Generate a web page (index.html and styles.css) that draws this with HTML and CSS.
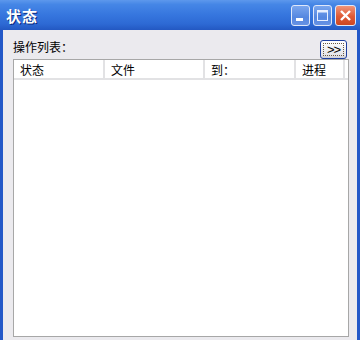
FILE: index.html
```html
<!DOCTYPE html>
<html>
<head>
    <meta charset="utf-8">
    <link rel="stylesheet" href="styles.css">
    <title>状态</title>
</head>
<body>
<div class="window">
    <div class="titlebar">
        <span class="title">状态</span>
        <div class="tb-buttons">
            <div class="tb-btn">
                <svg width="19" height="21" viewBox="0 0 19 21"><rect x="5" y="13" width="7" height="3" fill="#fff"/></svg>
            </div>
            <div class="tb-btn">
                <svg width="19" height="21" viewBox="0 0 19 21"><rect x="4.5" y="5.5" width="10" height="10" fill="none" stroke="#e8f0ff" stroke-width="1"/><rect x="4.5" y="5.5" width="10" height="2" fill="#e8f0ff"/></svg>
            </div>
            <div class="tb-btn close">
                <svg width="21" height="21" viewBox="0 0 21 21"><path d="M6 6 L15 15 M15 6 L6 15" stroke="#fff" stroke-width="2.4"/></svg>
            </div>
        </div>
    </div>
    <div class="frame">
        <div class="toprow">
            <span class="label">操作列表：</span>
            <div class="more-btn"><div class="focus">&gt;&gt;</div></div>
        </div>
        <div class="listview">
            <div class="header">
                <div class="col c1">状态</div>
                <div class="col c2">文件</div>
                <div class="col c3">到：</div>
                <div class="col c4">进程</div>
            </div>
        </div>
    </div>
</div>
</body>
</html>
```

FILE: styles.css
```css
* { margin: 0; padding: 0; box-sizing: border-box; }

body { background: #ebeaee; font-family: "Noto Sans CJK SC", "Liberation Sans", sans-serif; font-size: 12px; color: #000; }

.window { width: 360px; height: 340px; display: flex; flex-direction: column; overflow: hidden; }

.titlebar { height: 30px; flex: 0 0 auto; display: flex; align-items: center; justify-content: space-between;
            padding: 0 4px 0 6px;
            background: linear-gradient(to bottom, #5d98ec 0%, #4586e6 15%, #3676de 50%, #2d69d4 80%, #2358c2 100%); }
.title { color: #fff; font-weight: bold; font-size: 15px; text-shadow: 1px 1px 0 #0a2a80; letter-spacing: 1px; }

.tb-buttons { display: flex; gap: 3px; padding-top: 1px; }
.tb-btn { width: 19px; height: 21px; border: 1px solid #dfe8fa; border-radius: 3px;
          background: linear-gradient(to bottom, #7aa6ee, #5587e0 60%, #6792e4); display: flex; }
.tb-btn svg { margin: -1px; }
.tb-btn.close { width: 21px; background: linear-gradient(to bottom, #f0957a, #df5a36 55%, #cd4722); }

.frame { flex: 1 1 auto; display: flex; flex-direction: column;
         border-left: 3px solid #2358c8; border-right: 3px solid #2358c8;
         padding: 10px 9px 0 10px; }

.toprow { display: flex; justify-content: space-between; align-items: flex-start; height: 19px; }
.label { line-height: 12px; padding-top: 1px; }

.more-btn { width: 27px; height: 19px; margin-right: 1px; border: 1px solid #1d3f9e; border-radius: 3px;
            background: linear-gradient(to bottom, #ffffff, #e6e6ea 80%, #cfd0d8); padding: 2px; }
.more-btn .focus { height: 100%; border: 1px dotted #6a5a40; text-align: center; font-family: "Liberation Sans", sans-serif;
                   font-size: 13px; line-height: 12px; letter-spacing: -1px; }

.listview { width: 336px; height: 278px; background: #fff; border: 1px solid #a7a7a7; }
.header { display: flex; height: 20px; border-bottom: 2px solid #e2e2e4; }
.col { line-height: 19px; padding-left: 6px; border-right: 2px solid #e2e2e4; }
.c1 { width: 91px; }
.c2 { width: 100px; }
.c3 { width: 91px; }
.c4 { width: 49px; }
```
